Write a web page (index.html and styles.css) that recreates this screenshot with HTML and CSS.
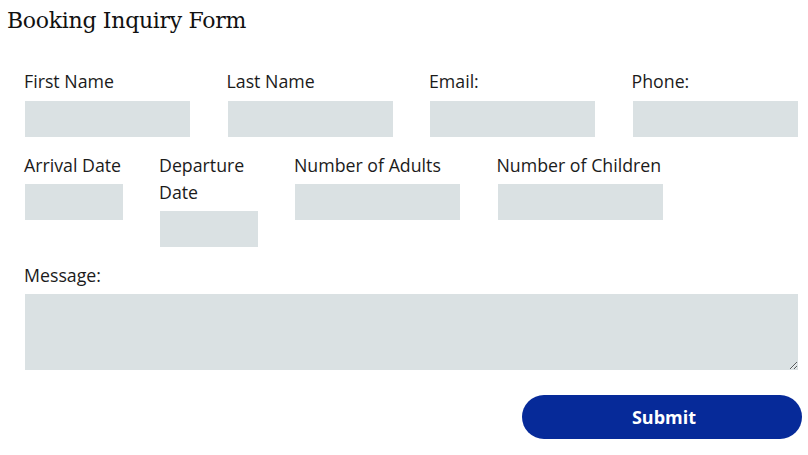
FILE: index.html
```html
<!DOCTYPE html>
<html lang="en">
<head>
    <meta charset="UTF-8">
    <meta name="viewport" content="width=device-width, initial-scale=1.0">
    <title>Booking Inquiry Form</title>
    <link rel="stylesheet" href="styles.css">
</head>
<body>

<h1 class="form-title">Booking Inquiry Form</h1>

<form class="booking-form">
    <!-- Guest details -->
    <div class="form-row">
        <div class="field wide">
            <label for="first-name">First Name</label>
            <input type="text" id="first-name">
        </div>
        <div class="field wide">
            <label for="last-name">Last Name</label>
            <input type="text" id="last-name">
        </div>
        <div class="field wide">
            <label for="email">Email:</label>
            <input type="email" id="email">
        </div>
        <div class="field wide">
            <label for="phone">Phone:</label>
            <input type="tel" id="phone">
        </div>
    </div>

    <!-- Stay details -->
    <div class="form-row">
        <div class="field narrow">
            <label for="arrival">Arrival Date</label>
            <input type="text" id="arrival">
        </div>
        <div class="field narrow">
            <label for="departure">Departure Date</label>
            <input type="text" id="departure">
        </div>
        <div class="field wide">
            <label for="adults">Number of Adults</label>
            <input type="text" id="adults">
        </div>
        <div class="field wide">
            <label for="children">Number of Children</label>
            <input type="text" id="children">
        </div>
    </div>

    <!-- Message -->
    <div class="field full">
        <label for="message">Message:</label>
        <textarea id="message"></textarea>
    </div>

    <div class="form-actions">
        <button type="submit" class="submit-button">Submit</button>
    </div>
</form>

</body>
</html>
```

FILE: styles.css
```css
/* Page */
body {
    margin: 0;
    font-family: "Open Sans", "Liberation Sans", sans-serif;
    color: #1b1b1b;
    background-color: #fff;
}

/* Heading */
.form-title {
    margin: 0;
    padding: 5px 7px 0;
    font-family: "DejaVu Serif", "Liberation Serif", serif;
    font-size: 22px;
    font-weight: normal;
    letter-spacing: -0.3px;
    line-height: 32px;
    color: #111;
}

/* Form */
.booking-form {
    padding: 31px 10px 0 24px;
}

.form-row {
    display: flex;
    align-items: flex-start;
    gap: 37.5px;
    margin-bottom: 15px;
}

.field label {
    display: block;
    font-size: 17.75px;
    line-height: 27px;
    margin-bottom: 5.5px;
}

.field input,
.field textarea {
    display: block;
    margin: 0 0 0 1px;
    border: none;
    background-color: #dae1e3;
    font-family: inherit;
    font-size: 15px;
    box-sizing: border-box;
}

.field input {
    height: 36px;
    width: 100%;
}

.wide {
    width: 165px;
}

.narrow {
    width: 97.5px;
}

.full label {
    margin-bottom: 4.5px;
}

.full textarea {
    width: calc(100% - 1px);
    height: 76px;
    resize: vertical;
}

/* Submit */
.form-actions {
    display: flex;
    justify-content: flex-end;
    margin: 25px -4px 0 0;
}

.submit-button {
    width: 280px;
    height: 44px;
    padding: 0 0 0 4px;
    border: none;
    border-radius: 22px;
    background-color: #062a99;
    color: #fff;
    font-family: "Open Sans", sans-serif;
    font-size: 18px;
    font-weight: bold;
    cursor: pointer;
}
```
